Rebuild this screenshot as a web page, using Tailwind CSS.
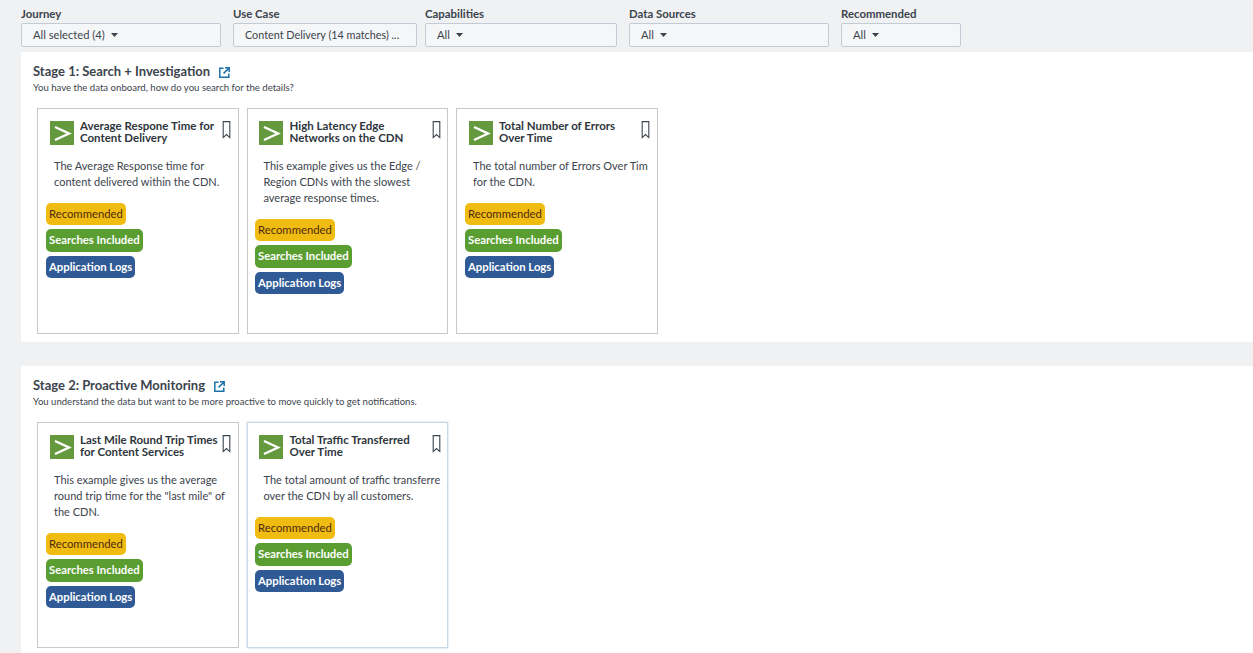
<!DOCTYPE html>
<html lang="en">

<head>
    <meta charset="UTF-8">
    <meta name="viewport" content="width=device-width, initial-scale=1.0">
    <title>Use Case Explorer</title>
    <script src="https://cdn.jsdelivr.net/npm/@tailwindcss/browser@4"></script>
</head>

<body class="bg-[#f0f1f3] h-[653px] overflow-hidden font-['Lato',sans-serif] text-[#3c444d]">
    <!-- Filters -->
    <div class="flex gap-3 pl-[21px] pt-[7px] h-[52px]">
        <div class="w-[200px]">
            <div class="text-[11.4px] leading-[13px] font-bold">Journey</div>
            <div class="mt-[3px] h-[24px] flex items-center gap-[6px] pl-[11px] text-[11.2px] bg-[#f5f6f8] border border-[#c3cbd4] rounded-[2px]">All selected (4) <svg width="7" height="4" viewBox="0 0 7 4"><path d="M0 0h7L3.5 4z" fill="#3c444d"/></svg></div>
        </div>
        <div class="w-[184px] -mr-1">
            <div class="text-[11.4px] leading-[13px] font-bold">Use Case</div>
            <div class="mt-[3px] h-[24px] flex items-center pl-[11px] text-[10.8px] bg-[#f5f6f8] border border-[#c3cbd4] rounded-[2px] whitespace-nowrap">Content Delivery (14 matches) ...</div>
        </div>
        <div class="w-[192px]">
            <div class="text-[11.4px] leading-[13px] font-bold">Capabilities</div>
            <div class="mt-[3px] h-[24px] flex items-center gap-[6px] pl-[11px] text-[11.2px] bg-[#f5f6f8] border border-[#c3cbd4] rounded-[2px]">All <svg width="7" height="4" viewBox="0 0 7 4"><path d="M0 0h7L3.5 4z" fill="#3c444d"/></svg></div>
        </div>
        <div class="w-[200px]">
            <div class="text-[11.4px] leading-[13px] font-bold">Data Sources</div>
            <div class="mt-[3px] h-[24px] flex items-center gap-[6px] pl-[11px] text-[11.2px] bg-[#f5f6f8] border border-[#c3cbd4] rounded-[2px]">All <svg width="7" height="4" viewBox="0 0 7 4"><path d="M0 0h7L3.5 4z" fill="#3c444d"/></svg></div>
        </div>
        <div class="w-[120px]">
            <div class="text-[11.4px] leading-[13px] font-bold">Recommended</div>
            <div class="mt-[3px] h-[24px] flex items-center gap-[6px] pl-[11px] text-[11.2px] bg-[#f5f6f8] border border-[#c3cbd4] rounded-[2px]">All <svg width="7" height="4" viewBox="0 0 7 4"><path d="M0 0h7L3.5 4z" fill="#3c444d"/></svg></div>
        </div>
    </div>

    <!-- Stage 1 -->
    <section class="ml-[21px] h-[290px] bg-white pl-3 pt-[13px]">
        <div class="flex items-center gap-[9px] h-[14px] text-[13px] font-bold">
            <span>Stage 1: Search + Investigation</span>
            <svg width="11" height="11" viewBox="0 0 11 11" fill="none" stroke="#1d72aa" stroke-width="1.5"><path d="M4.5 1.2H.8v9h9V6.5M6 .8h4.2V5M9.8 1.2 4.6 6.4"/></svg>
        </div>
        <p class="mt-[3px] text-[9.6px] leading-[12px]">You have the data onboard, how do you search for the details?</p>
        <div class="flex gap-2 ml-1 mt-[14px]">
            <article class="w-[201.5px] h-[226px] border border-[#c8c8c8] overflow-hidden">
                <div class="flex pl-3 pt-3 h-[39px]">
                    <svg class="shrink-0" width="24" height="24" viewBox="0 0 24 24"><rect width="24" height="24" fill="#65993d"/><path d="M5 6l14 6.5L5 19" fill="none" stroke="#fff" stroke-width="2.4"/></svg>
                    <h3 class="ml-[6px] -mt-px w-[138px] text-[11.5px] leading-[12px] font-bold text-[#2f363d]">Average Respone Time for Content Delivery</h3>
                    <svg class="ml-[4px] shrink-0" width="9" height="18" viewBox="0 0 9 18" fill="none" stroke="#3c444d" stroke-width="1.1"><path d="M1.2.6h6.6v16l-3.3-3-3.3 3z"/></svg>
                </div>
                <p class="mt-[10px] ml-4 text-[11px] leading-[16px] whitespace-nowrap">The Average Response time for<br>content delivered within the CDN.</p>
                <div class="mt-[13px] ml-2 flex flex-col items-start gap-1 text-[11.3px] leading-[21px]">
                    <span class="px-[3px] pb-px rounded-[5px] bg-[#f0bc11] text-[#4f2a10]">Recommended</span>
                    <span class="px-[3px] pb-px rounded-[5px] leading-[22px] bg-[#5a9e32] text-white font-bold">Searches Included</span>
                    <span class="px-[3px] pb-px rounded-[5px] bg-[#2f5a96] text-white font-bold">Application Logs</span>
                </div>
            </article>
            <article class="w-[201.5px] h-[226px] border border-[#c8c8c8] overflow-hidden">
                <div class="flex pl-[11.5px] pt-3 h-[39px]">
                    <svg class="shrink-0" width="24" height="24" viewBox="0 0 24 24"><rect width="24" height="24" fill="#65993d"/><path d="M5 6l14 6.5L5 19" fill="none" stroke="#fff" stroke-width="2.4"/></svg>
                    <h3 class="ml-[6.5px] -mt-px w-[138px] text-[11.5px] leading-[12px] font-bold text-[#2f363d]">High Latency Edge Networks on the CDN</h3>
                    <svg class="ml-[4px] shrink-0" width="9" height="18" viewBox="0 0 9 18" fill="none" stroke="#3c444d" stroke-width="1.1"><path d="M1.2.6h6.6v16l-3.3-3-3.3 3z"/></svg>
                </div>
                <p class="mt-[10px] ml-4 text-[11px] leading-[16px] whitespace-nowrap">This example gives us the Edge /<br>Region CDNs with the slowest<br>average response times.</p>
                <div class="mt-[13px] ml-[7.5px] flex flex-col items-start gap-1 text-[11.3px] leading-[21px]">
                    <span class="px-[3px] pb-px rounded-[5px] bg-[#f0bc11] text-[#4f2a10]">Recommended</span>
                    <span class="px-[3px] pb-px rounded-[5px] leading-[22px] bg-[#5a9e32] text-white font-bold">Searches Included</span>
                    <span class="px-[3px] pb-px rounded-[5px] bg-[#2f5a96] text-white font-bold">Application Logs</span>
                </div>
            </article>
            <article class="w-[202px] h-[226px] border border-[#c8c8c8] overflow-hidden">
                <div class="flex pl-3 pt-3 h-[39px]">
                    <svg class="shrink-0" width="24" height="24" viewBox="0 0 24 24"><rect width="24" height="24" fill="#65993d"/><path d="M5 6l14 6.5L5 19" fill="none" stroke="#fff" stroke-width="2.4"/></svg>
                    <h3 class="ml-[6px] -mt-px w-[138px] text-[11.5px] leading-[12px] font-bold text-[#2f363d]">Total Number of Errors Over Time</h3>
                    <svg class="ml-[4px] shrink-0" width="9" height="18" viewBox="0 0 9 18" fill="none" stroke="#3c444d" stroke-width="1.1"><path d="M1.2.6h6.6v16l-3.3-3-3.3 3z"/></svg>
                </div>
                <p class="mt-[10px] ml-4 text-[11px] leading-[16px] whitespace-nowrap">The total number of Errors Over Tim<br>for the CDN.</p>
                <div class="mt-[13px] ml-2 flex flex-col items-start gap-1 text-[11.3px] leading-[21px]">
                    <span class="px-[3px] pb-px rounded-[5px] bg-[#f0bc11] text-[#4f2a10]">Recommended</span>
                    <span class="px-[3px] pb-px rounded-[5px] leading-[22px] bg-[#5a9e32] text-white font-bold">Searches Included</span>
                    <span class="px-[3px] pb-px rounded-[5px] bg-[#2f5a96] text-white font-bold">Application Logs</span>
                </div>
            </article>
        </div>
    </section>

    <!-- Stage 2 -->
    <section class="ml-[21px] mt-6 h-[300px] bg-white pl-3 pt-[13px]">
        <div class="flex items-center gap-[9px] h-[14px] text-[13px] font-bold">
            <span>Stage 2: Proactive Monitoring</span>
            <svg width="11" height="11" viewBox="0 0 11 11" fill="none" stroke="#1d72aa" stroke-width="1.5"><path d="M4.5 1.2H.8v9h9V6.5M6 .8h4.2V5M9.8 1.2 4.6 6.4"/></svg>
        </div>
        <p class="mt-[3px] text-[9.55px] leading-[12px]">You understand the data but want to be more proactive to move quickly to get notifications.</p>
        <div class="flex gap-2 ml-1 mt-[14px]">
            <article class="w-[201.5px] h-[226px] border border-[#c8c8c8] overflow-hidden">
                <div class="flex pl-3 pt-3 h-[39px]">
                    <svg class="shrink-0" width="24" height="24" viewBox="0 0 24 24"><rect width="24" height="24" fill="#65993d"/><path d="M5 6l14 6.5L5 19" fill="none" stroke="#fff" stroke-width="2.4"/></svg>
                    <h3 class="ml-[6px] -mt-px w-[138px] text-[11.5px] leading-[12px] font-bold text-[#2f363d]">Last Mile Round Trip Times for Content Services</h3>
                    <svg class="ml-[4px] shrink-0" width="9" height="18" viewBox="0 0 9 18" fill="none" stroke="#3c444d" stroke-width="1.1"><path d="M1.2.6h6.6v16l-3.3-3-3.3 3z"/></svg>
                </div>
                <p class="mt-[10px] ml-4 text-[11px] leading-[16px] whitespace-nowrap">This example gives us the average<br>round trip time for the "last mile" of<br>the CDN.</p>
                <div class="mt-[13px] ml-2 flex flex-col items-start gap-1 text-[11.3px] leading-[21px]">
                    <span class="px-[3px] pb-px rounded-[5px] bg-[#f0bc11] text-[#4f2a10]">Recommended</span>
                    <span class="px-[3px] pb-px rounded-[5px] leading-[22px] bg-[#5a9e32] text-white font-bold">Searches Included</span>
                    <span class="px-[3px] pb-px rounded-[5px] bg-[#2f5a96] text-white font-bold">Application Logs</span>
                </div>
            </article>
            <article class="w-[201.5px] h-[226px] border border-[#c9d9e8] shadow-[0_0_2px_#bcd3e8] overflow-hidden">
                <div class="flex pl-[11.5px] pt-3 h-[39px]">
                    <svg class="shrink-0" width="24" height="24" viewBox="0 0 24 24"><rect width="24" height="24" fill="#65993d"/><path d="M5 6l14 6.5L5 19" fill="none" stroke="#fff" stroke-width="2.4"/></svg>
                    <h3 class="ml-[6.5px] -mt-px w-[138px] text-[11.5px] leading-[12px] font-bold text-[#2f363d]">Total Traffic Transferred Over Time</h3>
                    <svg class="ml-[4px] shrink-0" width="9" height="18" viewBox="0 0 9 18" fill="none" stroke="#3c444d" stroke-width="1.1"><path d="M1.2.6h6.6v16l-3.3-3-3.3 3z"/></svg>
                </div>
                <p class="mt-[10px] ml-4 text-[11px] leading-[16px] whitespace-nowrap">The total amount of traffic transferre<br>over the CDN by all customers.</p>
                <div class="mt-[13px] ml-[7.5px] flex flex-col items-start gap-1 text-[11.3px] leading-[21px]">
                    <span class="px-[3px] pb-px rounded-[5px] bg-[#f0bc11] text-[#4f2a10]">Recommended</span>
                    <span class="px-[3px] pb-px rounded-[5px] leading-[22px] bg-[#5a9e32] text-white font-bold">Searches Included</span>
                    <span class="px-[3px] pb-px rounded-[5px] bg-[#2f5a96] text-white font-bold">Application Logs</span>
                </div>
            </article>
        </div>
    </section>
</body>

</html>
